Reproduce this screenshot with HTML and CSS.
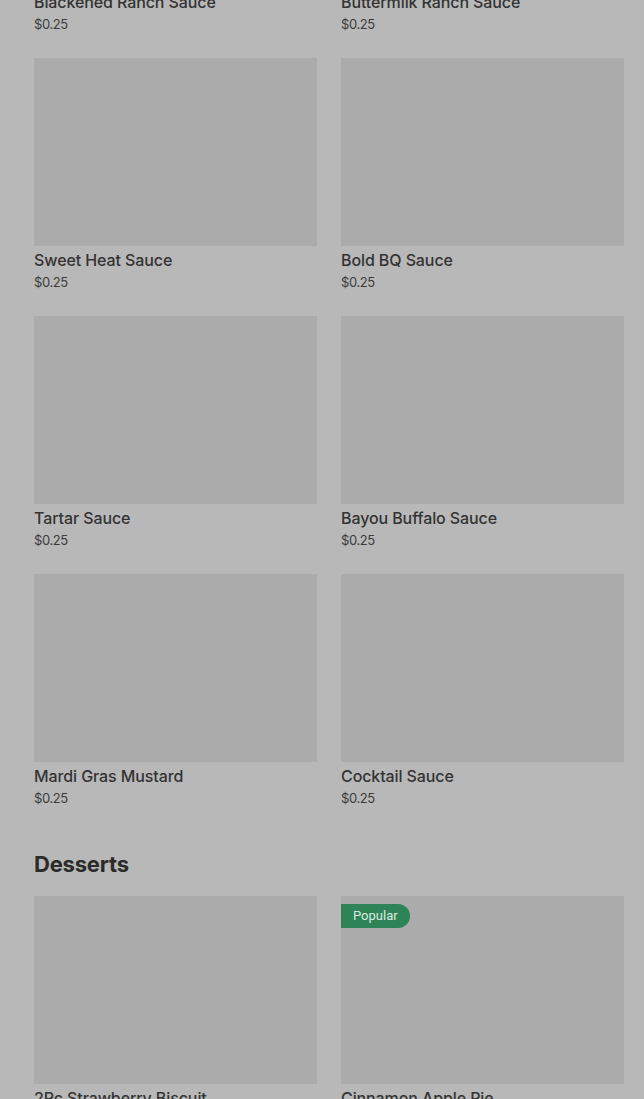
FILE: index.html
```html
<!DOCTYPE html>
<html lang="en">
<head>
    <meta charset="UTF-8">
    <meta name="viewport" content="width=device-width, initial-scale=1.0">
    <title>Menu</title>
    <link rel="stylesheet" href="styles.css">
</head>
<body>
    <div class="menu">
        <section class="section">
            <div class="grid">
                <div class="item">
                    <div class="photo"></div>
                    <div class="name">Blackened Ranch Sauce</div>
                    <div class="price">$0.25</div>
                </div>
                <div class="item">
                    <div class="photo"></div>
                    <div class="name">Buttermilk Ranch Sauce</div>
                    <div class="price">$0.25</div>
                </div>
                <div class="item">
                    <div class="photo"></div>
                    <div class="name">Sweet Heat Sauce</div>
                    <div class="price">$0.25</div>
                </div>
                <div class="item">
                    <div class="photo"></div>
                    <div class="name">Bold BQ Sauce</div>
                    <div class="price">$0.25</div>
                </div>
                <div class="item">
                    <div class="photo"></div>
                    <div class="name">Tartar Sauce</div>
                    <div class="price">$0.25</div>
                </div>
                <div class="item">
                    <div class="photo"></div>
                    <div class="name">Bayou Buffalo Sauce</div>
                    <div class="price">$0.25</div>
                </div>
                <div class="item">
                    <div class="photo"></div>
                    <div class="name">Mardi Gras Mustard</div>
                    <div class="price">$0.25</div>
                </div>
                <div class="item">
                    <div class="photo"></div>
                    <div class="name">Cocktail Sauce</div>
                    <div class="price">$0.25</div>
                </div>
            </div>
        </section>

        <section class="section">
            <h2>Desserts</h2>
            <div class="grid">
                <div class="item">
                    <div class="photo"></div>
                    <div class="name">2Pc Strawberry Biscuit</div>
                    <div class="price">$2.99</div>
                </div>
                <div class="item">
                    <div class="photo">
                        <span class="badge">Popular</span>
                    </div>
                    <div class="name">Cinnamon Apple Pie</div>
                    <div class="price">$1.49</div>
                </div>
            </div>
        </section>
    </div>
</body>
</html>
```

FILE: styles.css
```css
body {
    margin: 0;
    background-color: #b8b8b8;
    font-family: Inter, "Noto Sans", sans-serif;
    color: #2f2f2f;
    overflow: hidden;
}

.menu {
    margin-top: -200px; /* scrolled part way down the list */
    padding: 0 20px 0 34px;
}

.section h2 {
    margin: 40px 0 16px;
    font-size: 22px;
    line-height: 32px;
    font-weight: 700;
    letter-spacing: -0.2px;
    color: #2b2b2b;
}

.grid {
    display: grid;
    grid-template-columns: 1fr 1fr;
    column-gap: 24px;
    row-gap: 24px;
}

.photo {
    position: relative;
    height: 188px;
    background-color: #ababab;
}

.name {
    margin-top: 2px;
    font-size: 16px;
    line-height: 24px;
    font-weight: 500;
    letter-spacing: -0.1px;
    color: #333;
}

.price {
    font-size: 13px;
    line-height: 20px;
    letter-spacing: -0.4px;
    color: #3c3c3c;
}

.badge {
    position: absolute;
    top: 8px;
    left: 0;
    height: 24px;
    padding: 0 12px;
    line-height: 24px;
    font-family: Roboto, sans-serif;
    font-size: 13px;
    color: #dcebe2;
    background-color: #2f8457;
    border-radius: 0 12px 12px 0;
}
```
